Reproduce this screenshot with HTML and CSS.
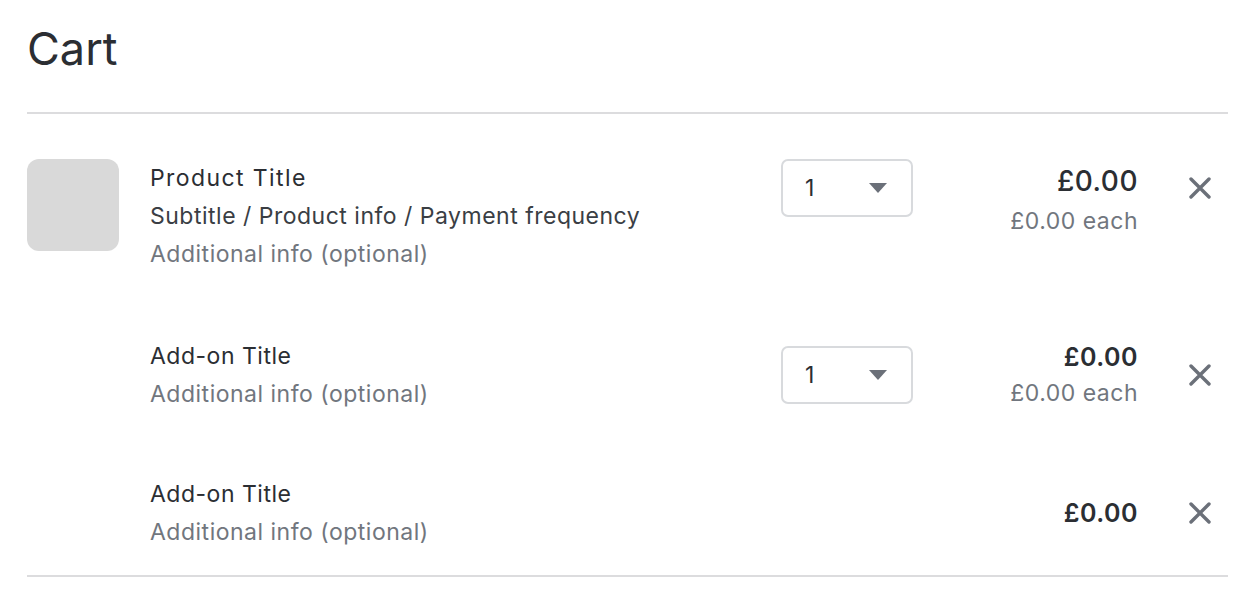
FILE: index.html
```html
<!DOCTYPE html>
<html lang="en">
<head>
<meta charset="utf-8">
<title>Cart</title>
<link rel="stylesheet" href="styles.css">
</head>
<body>
<main class="cart">
  <h1 class="cart-title">Cart</h1>
  <ul class="cart-list">
    <li class="cart-row cart-row--main">
      <div class="thumb"></div>
      <div class="info">
        <div class="info-title info-title--product">Product Title</div>
        <div class="info-sub">Subtitle / Product info / Payment frequency</div>
        <div class="info-extra">Additional info (optional)</div>
      </div>
      <div class="controls">
        <div class="qty">
          <div class="select"><span class="select-value">1</span><span class="caret"></span></div>
        </div>
        <div class="price price--large">
          <div class="price-total">£0.00</div>
          <div class="price-each">£0.00 each</div>
        </div>
        <div class="remove">
          <svg class="remove-icon" viewBox="0 0 22 22" width="22" height="22"><path d="M2 2 L20 20 M20 2 L2 20" stroke="#6b7079" stroke-width="3.4" stroke-linecap="round" fill="none"/></svg>
        </div>
      </div>
    </li>
    <li class="cart-row cart-row--addon">
      <div class="thumb thumb--empty"></div>
      <div class="info">
        <div class="info-title">Add-on Title</div>
        <div class="info-extra">Additional info (optional)</div>
      </div>
      <div class="controls">
        <div class="qty">
          <div class="select"><span class="select-value">1</span><span class="caret"></span></div>
        </div>
        <div class="price">
          <div class="price-total">£0.00</div>
          <div class="price-each">£0.00 each</div>
        </div>
        <div class="remove">
          <svg class="remove-icon" viewBox="0 0 22 22" width="22" height="22"><path d="M2 2 L20 20 M20 2 L2 20" stroke="#6b7079" stroke-width="3.4" stroke-linecap="round" fill="none"/></svg>
        </div>
      </div>
    </li>
    <li class="cart-row cart-row--addon">
      <div class="thumb thumb--empty"></div>
      <div class="info">
        <div class="info-title">Add-on Title</div>
        <div class="info-extra">Additional info (optional)</div>
      </div>
      <div class="controls">
        <div class="qty"></div>
        <div class="price">
          <div class="price-total">£0.00</div>
        </div>
        <div class="remove">
          <svg class="remove-icon" viewBox="0 0 22 22" width="22" height="22"><path d="M2 2 L20 20 M20 2 L2 20" stroke="#6b7079" stroke-width="3.4" stroke-linecap="round" fill="none"/></svg>
        </div>
      </div>
    </li>
  </ul>
</main>
</body>
</html>
```

FILE: styles.css
```css
* { box-sizing: border-box; }

html, body {
  margin: 0;
  padding: 0;
  background: #ffffff;
}

body {
  font-family: Inter, "Noto Sans", "Liberation Sans", sans-serif;
  color: #2b2e33;
}

.cart {
  padding: 0 26px 0 27px;
}

.cart-title {
  margin: 0;
  padding-top: 22px;
  height: 114px;
  font-size: 45px;
  font-weight: 400;
  line-height: 54px;
  letter-spacing: 0;
  color: #2b2e33;
  border-bottom: 2px solid #dcdcde;
}

.cart-list {
  list-style: none;
  margin: 0;
  padding: 45px 0 24px;
  border-bottom: 2px solid #dcdcde;
}

.cart-row {
  display: flex;
  align-items: center;
}

.cart-row + .cart-row {
  margin-top: 62px;
}

.cart-row--main {
  align-items: flex-start;
  padding-bottom: 2px;
}

.thumb {
  width: 92px;
  height: 92px;
  flex: 0 0 92px;
  margin-right: 31px;
  background: #d9d9d9;
  border-radius: 12px;
}

.thumb--empty {
  height: 0;
  background: none;
}

.info {
  flex: 1;
  font-size: 23px;
  line-height: 38px;
  letter-spacing: 0.5px;
}

.info-title {
  color: #2b2e33;
}

.info-title--product {
  letter-spacing: 1.4px;
}

.info-sub {
  color: #3a3e44;
}

.info-extra {
  color: #71767e;
}

.controls {
  display: flex;
  align-items: center;
}

.cart-row--main .controls {
  align-items: flex-start;
}

.qty {
  width: 132px;
  flex: 0 0 132px;
}

.select {
  height: 58px;
  border: 2px solid #d8dadd;
  border-radius: 7px;
  display: flex;
  align-items: center;
  justify-content: space-between;
  padding: 0 24px 0 22px;
}

.select-value {
  font-size: 23px;
  color: #2b2e33;
}

.caret {
  width: 0;
  height: 0;
  border-left: 9px solid transparent;
  border-right: 9px solid transparent;
  border-top: 10px solid #6b7079;
}

.price {
  width: 225px;
  flex: 0 0 225px;
  text-align: right;
  letter-spacing: 0.5px;
}

.price-total {
  font-size: 25px;
  font-weight: 600;
  line-height: 36px;
  color: #2b2e33;
}

.price-each {
  font-size: 23px;
  line-height: 36px;
  color: #71767e;
}

.price--large {
  padding-top: 2px;
}

.price--large .price-total {
  font-size: 28px;
  font-weight: 500;
  line-height: 40px;
}

.price--large .price-each {
  line-height: 40px;
}

.remove {
  width: 90px;
  flex: 0 0 90px;
  display: flex;
  justify-content: flex-end;
  padding-right: 17px;
}

.cart-row--main .remove {
  margin-top: 18px;
}

.remove-icon {
  display: block;
}
```
